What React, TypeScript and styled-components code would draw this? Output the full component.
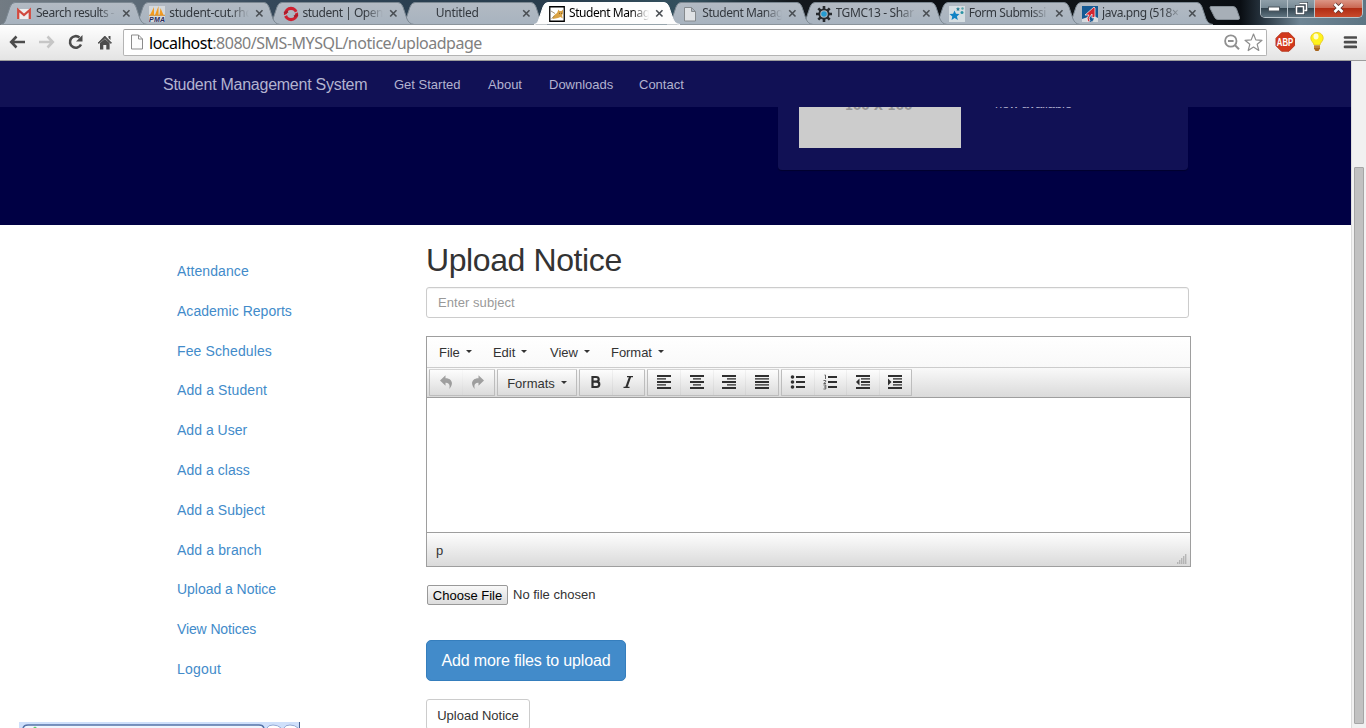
import React from 'react';
import styled, { createGlobalStyle } from 'styled-components';

const Global = createGlobalStyle`
  * { box-sizing: border-box; }
  html, body { margin: 0; padding: 0; overflow: hidden; }
  body { font-family: "Liberation Sans", Arial, sans-serif; background: #fff; }
  h1, p, ul { margin: 0; padding: 0; }
`;

const Screen = styled.div`
  width: 1366px;
  height: 728px;
  overflow: hidden;
  display: flex;
  flex-direction: column;
  position: relative;
`;

/* ---------- window frame and tabs ---------- */

const Frame = styled.div`
  height: 25px;
  flex: none;
  display: flex;
  justify-content: space-between;
  background: linear-gradient(90deg, #727b83 0, #5e6c78 130px, #35485a 270px, #2a3f50 420px, #283c4c 560px, #34515f 690px, #14191e 790px, #0d1014 930px, #10161a 1150px, #090d12 1240px, #27343f 1262px, #6e8594 1300px, #5d7584 1366px);
`;

const TabStrip = styled.div`
  display: flex;
  padding-left: 1px;
  height: 25px;
`;

const TabBox = styled.div<{ $order: number }>`
  width: 133.25px;
  height: 25px;
  flex: none;
  position: relative;
  z-index: ${p => p.$order};
`;

const TabShape = styled.svg`
  position: absolute;
  left: 0;
  top: 0;
  width: 147px;
  height: 25px;
`;

const TabBody = styled.div`
  position: relative;
  display: flex;
  align-items: center;
  height: 25px;
  padding: 2px 0 0 15px;
`;

const Favicon = styled.svg`
  width: 16px;
  height: 16px;
  flex: none;
  margin-right: 4px;
`;

const TabTitle = styled.span<{ $active?: boolean; $ls: number }>`
  font: 12px/16px "Noto Sans", "Open Sans", sans-serif;
  letter-spacing: ${p => p.$ls}px;
  color: ${p => (p.$active ? '#000' : '#33383e')};
  width: 80px;
  margin-top: -1px;
  white-space: nowrap;
  overflow: hidden;
  mask-image: linear-gradient(90deg, #000 78%, transparent 100%);
`;

const Cross = styled.svg`
  width: 9px;
  height: 9px;
  margin-left: 6px;
  flex: none;
`;

const NewTab = styled.svg`
  width: 32px;
  height: 16px;
  margin: 5px 0 0 9px;
`;

const Controls = styled.div`
  display: flex;
  width: 103px;
  height: 18px;
  margin-right: 3px;
  border: 1px solid #b9c4cb;
  border-top: 0;
  border-radius: 0 0 5px 5px;
  overflow: hidden;
`;

const Control = styled.div<{ $close?: boolean }>`
  width: ${p => (p.$close ? 47 : 27)}px;
  display: flex;
  align-items: center;
  justify-content: center;
  flex: none;
  padding-bottom: 1px;
  border-right: ${p => (p.$close ? 0 : 1)}px solid #b9c4cb;
  background: ${p =>
    p.$close
      ? 'linear-gradient(#dc9585 0, #c96550 48%, #b12d14 50%, #c84a2c 100%)'
      : 'linear-gradient(#8f9fa9 0, #768994 48%, #33444f 50%, #5f7480 100%)'};
`;

/* ---------- address bar ---------- */

const Toolbar = styled.div`
  height: 36px;
  flex: none;
  display: flex;
  align-items: center;
  padding: 0 8px 1px 7px;
  background: linear-gradient(#fefefe, #e4e4e4);
  border-bottom: 1px solid #9c9c9c;
`;

const NavIcon = styled.svg`
  width: 22px;
  height: 22px;
  margin-right: 7px;
  flex: none;
`;

const UrlBox = styled.div`
  width: 1144px;
  height: 27px;
  flex: none;
  display: flex;
  align-items: center;
  border: 1px solid #b4b4b4;
  border-top-color: #9d9d9d;
  border-radius: 2px;
  background: #fff;
  padding: 0 3px 0 6px;
`;

const Url = styled.span`
  flex: 1;
  font: 16px/22px "Noto Sans", "Open Sans", sans-serif;
  letter-spacing: -0.48px;
  color: #808080;
  margin: 1px 0 0 5px;
  b { font-weight: 400; color: #000; }
`;

const BarIcon = styled.svg`
  flex: none;
`;

/* ---------- page ---------- */

const Viewport = styled.div`
  flex: 1;
  display: flex;
  min-height: 0;
`;

const Page = styled.div`
  width: 1351px;
  overflow: hidden;
  background: #fff;
`;

const ScrollTrack = styled.div`
  width: 15px;
  background: #f1f1f1;
  border-left: 1px solid #dcdcdc;
  padding: 106px 2px 4px;
`;

const ScrollThumb = styled.div`
  height: 557px;
  width: 10px;
  background: #c1c1c1;
  border: 1px solid #a6a6a6;
  border-radius: 1px;
`;

const Navbar = styled.nav`
  height: 46px;
  background: #111155;
  position: relative;
  z-index: 2;
  display: flex;
  align-items: center;
  padding: 1px 0 0 163px;
  color: #b3b3d0;
`;

const Brand = styled.span`
  font-size: 16px;
  line-height: 20px;
  width: 231px;
  letter-spacing: -0.26px;
`;

const NavLink = styled.span<{ $w: number }>`
  font-size: 13px;
  line-height: 20px;
  padding-top: 1px;
  width: ${p => p.$w}px;
`;

const Hero = styled.section`
  height: 118px;
  background: #000044;
  display: flex;
  align-items: flex-end;
  justify-content: flex-end;
  padding: 0 163px 55px 0;
  overflow: hidden;
`;

const Card = styled.div`
  width: 410px;
  height: 100px;
  flex: none;
  background: #111155;
  border-radius: 4px;
  box-shadow: 0 1px 1px #00002e;
  padding: 0 21px 22px;
  display: flex;
`;

const Placeholder = styled.div`
  width: 162px;
  height: 78px;
  background: #ccc;
  color: #969696;
  font: bold 12px/16px "DejaVu Sans", sans-serif;
  text-align: center;
  padding-top: 28px;
  padding-right: 3px;
`;

const CardText = styled.p`
  margin-left: 34px;
  padding-top: 25px;
  font-size: 13px;
  line-height: 18px;
  letter-spacing: -0.15px;
  color: #b3b3d0;
`;

const Columns = styled.div`
  display: flex;
  padding-left: 177px;
`;

const Sidebar = styled.ul`
  list-style: none;
  width: 249px;
  flex: none;
  padding-top: 26px;
`;

const SideLink = styled.li<{ $ls: number }>`
  height: 39.8px;
  line-height: 40px;
  font-size: 14px;
  letter-spacing: ${p => p.$ls}px;
  color: #428bca;
`;

const Main = styled.main`
  width: 765px;
  display: flex;
  flex-direction: column;
  align-items: flex-start;
`;

const Title = styled.h1`
  font-size: 32px;
  line-height: 36px;
  font-weight: 400;
  color: #333;
  letter-spacing: -0.4px;
  margin-top: 17px;
`;

const Subject = styled.div`
  width: 763px;
  height: 31px;
  margin-top: 9px;
  border: 1px solid #ccc;
  border-radius: 3px;
  padding: 0 11px;
  font-size: 13px;
  line-height: 29px;
  letter-spacing: 0.06px;
  color: #999;
  box-shadow: inset 0 1px 1px rgba(0, 0, 0, 0.05);
`;

const Editor = styled.div`
  width: 765px;
  height: 231px;
  margin-top: 18px;
  border: 1px solid #9e9e9e;
  display: flex;
  flex-direction: column;
`;

const MenuRow = styled.div`
  height: 31px;
  display: flex;
  align-items: center;
  padding-left: 12px;
  background: linear-gradient(#fff, #f9f9f9);
  border-bottom: 1px solid #ccc;
`;

const MenuItem = styled.div<{ $w: number }>`
  width: ${p => p.$w}px;
  display: flex;
  align-items: center;
  gap: 6px;
  font-size: 13px;
  letter-spacing: -0.05px;
  color: #333;
`;

const Caret = styled.i`
  border: 3px solid transparent;
  border-top-color: #333;
  border-bottom: 0;
  margin-top: -2px;
`;

const ToolRow = styled.div`
  height: 30px;
  display: flex;
  padding: 1px 0 0 2px;
  gap: 2px;
  background: linear-gradient(#f9f9f9, #dadada);
  border-bottom: 1px solid #9e9e9e;
`;

const Group = styled.div<{ $w: number }>`
  width: ${p => p.$w}px;
  height: 27px;
  display: flex;
  border: 1px solid #bdbdbd;
  border-top-color: #d4d4d4;
  border-radius: 1px;
  background: linear-gradient(#fdfdfd, #dbdbdb);
`;

const ToolButton = styled.div<{ $dim?: boolean; $text?: boolean }>`
  flex: 1;
  display: flex;
  align-items: center;
  justify-content: center;
  gap: 6px;
  padding-bottom: ${p => (p.$text ? 0 : 1)}px;
  padding-top: ${p => (p.$text ? 1 : 0)}px;
  font-size: 13px;
  color: #333;
  opacity: ${p => (p.$dim ? 0.42 : 1)};
  & + & { border-left: 1px solid rgba(0, 0, 0, 0.04); }
  svg { width: 16px; height: 16px; }
`;

const EditArea = styled.div`
  flex: 1;
`;

const StatusBar = styled.div`
  height: 34px;
  border-top: 1px solid #9e9e9e;
  background: linear-gradient(#fdfdfd, #dadada);
  display: flex;
  justify-content: space-between;
  align-items: flex-end;
  padding: 0 3px 2px 9px;
  font-size: 13px;
  color: #333;
  span { margin-bottom: 6px; }
`;

const FileRow = styled.div`
  display: flex;
  align-items: center;
  height: 20px;
  margin: 18px 0 0 1px;
  font-size: 13px;
  color: #333;
`;

const FileButton = styled.div`
  width: 81px;
  height: 20px;
  border: 1px solid #999;
  border-radius: 2px;
  background: linear-gradient(#f8f8f8, #dcdcdc);
  color: #000;
  line-height: 19px;
  text-align: center;
  margin-right: 5px;
`;

const FileName = styled.span`
  padding-bottom: 2px;
`;

const AddButton = styled.div`
  width: 200px;
  height: 41px;
  margin-top: 35px;
  background: #428bca;
  border: 1px solid #357ebd;
  border-radius: 5px;
  color: #fff;
  font-size: 16px;
  line-height: 39px;
  letter-spacing: -0.15px;
  text-align: center;
`;

const SubmitButton = styled.div`
  width: 104px;
  height: 31px;
  margin-top: 18px;
  border: 1px solid #ccc;
  border-radius: 3px;
  color: #333;
  font-size: 13px;
  line-height: 31px;
  text-align: center;
`;

const DownloadStrip = styled.svg`
  position: absolute;
  left: 19px;
  top: 722px;
`;

/* ---------- icons ---------- */

const PageGlyph = () => (
  <path d="M2.500 1.500h7l4 4v9.500h-11z M9.500 1.500v4h4" fill="#dfe2e5" stroke="#858a8e" strokeWidth="1" />
);

const favicons: Record<string, React.ReactNode> = {
  gmail: (
    <>
      <path d="M1 3h14v10H1z" fill="#eee" />
      <path d="M2.2 13V4L8 9l5.8-5v9" fill="none" stroke="#d14a3f" strokeWidth="2.3" />
    </>
  ),
  pma: (
    <>
      <path d="M0 0h16v16H0z" fill="#d5d9dc" />
      <path d="M1 9L5 1v8zM6 9L9.500 0v9zM10.500 9l1-7 3 7z" fill="#f29a1f" />
      <path d="M0 9.300h16" stroke="#d98c28" strokeWidth="1" />
      <text x="0" y="16" fontSize="7" fontWeight="bold" fontStyle="italic" fontFamily="Liberation Sans" fill="#29295c" textLength="16">PMA</text>
    </>
  ),
  openshift: (
    <>
      <circle cx="8" cy="8" r="5.600" fill="none" stroke="#cf2030" strokeWidth="3.200" />
      <path d="M0 10.500L5 8M11 7.500l5-2.500" stroke="#b1b9c2" strokeWidth="1.200" />
      <path d="M1 7l4-1.500M11 10.500l4-1.500" stroke="#a91d2c" strokeWidth="2" />
    </>
  ),
  tomcat: (
    <>
      <path d="M.75.75h14.500v14.500H.75z" fill="#fff" stroke="#000" strokeWidth="1.300" />
      <path d="M4 10.500l2.500-2.500 1.500-1 1.500-3.500 1 1.500h2l1.500-1.500v4l-1 1.500.8 3.500-2.300-1.500-2.500 1-2.500.5-3 .5z" fill="#dba344" />
      <path d="M2 5l4 2.500M2.500 12.500l3-2.500" stroke="#8d7b5b" strokeWidth=".8" />
      <path d="M10 7.300h.8M12 7.300h.8" stroke="#4d3a1c" strokeWidth=".9" />
    </>
  ),
  page: <PageGlyph />,
  gear: (
    <>
      <g stroke="#262a2e" strokeWidth="2.600">
        <path d="M8 0v16M0 8h16M2.300 2.300l11.400 11.400M13.700 2.300L2.300 13.700" />
      </g>
      <circle cx="8" cy="8" r="5.600" fill="#262a2e" />
      <circle cx="8" cy="8" r="3.800" fill="#b1b9c2" />
      <circle cx="8" cy="8" r="2.800" fill="#259bd0" />
    </>
  ),
  stars: (
    <>
      <path d="M0 0h16v16H0z" fill="#d6dee2" />
      <path d="M5.500 4.500l1.500 3.300 3.500.2-2.600 2.400 1 3.600-3.300-1.900L2.500 14l.8-3.600L.5 8l3.600-.3z" fill="#1283c4" />
      <path d="M9 1l.7 1.300 1.300.2-1 1 .3 1.500L9 4.300 7.700 5 8 3.500l-1-1 1.300-.2z" fill="#2b7f94" />
      <circle cx="13.500" cy="2.500" r="1.200" fill="#5aa5ad" />
      <circle cx="13" cy="6.500" r="1.500" fill="#2b93a4" />
    </>
  ),
  java: (
    <>
      <path d="M0 0h16v12L8 16H0z" fill="#155a94" />
      <path d="M0 13l6-2v5H0zM12 10l4 2v4h-5z" fill="#d6dade" />
      <path d="M3 9L12 1l1 1v9l-3 1v-4l-3 4 1 3-2 1-1-4 2-3z" fill="#d22630" stroke="#fff" strokeWidth=".7" />
    </>
  ),
};

type TabInfo = { title: string; icon?: string; ls: number };

const tabs: TabInfo[] = [
  { title: 'Search results -', icon: 'gmail', ls: -0.48 },
  { title: 'student-cut.rhc', icon: 'pma', ls: -0.3 },
  { title: 'student | Open', icon: 'openshift', ls: -0.48 },
  { title: 'Untitled', ls: -0.28 },
  { title: 'Student Manag', icon: 'tomcat', ls: -0.45 },
  { title: 'Student Manag', icon: 'page', ls: -0.45 },
  { title: 'TGMC13 - Shar', icon: 'gear', ls: -0.38 },
  { title: 'Form Submissi', icon: 'stars', ls: -0.45 },
  { title: 'java.png (518×', icon: 'java', ls: -0.42 },
];

const Tab = ({ tab, index }: { tab: TabInfo; index: number }) => {
  const active = index === 4;
  return (
    <TabBox $order={active ? 20 : 10 - index}>
      <TabShape viewBox="0 0 147 25">
        <defs>
          <linearGradient id="idle" x1="0" y1="0" x2="0" y2="1">
            <stop offset="0" stopColor="#b3bac3" />
            <stop offset="1" stopColor="#a7b3bf" />
          </linearGradient>
        </defs>
        <path
          d="M0 24.500C3 24 4 22 5 19L9 7Q10.500 2.500 14 2.500H130Q133.500 2.500 135 7L139 19C140.500 22 142 24 146 24.500"
          fill={active ? '#fdfdfd' : 'url(#idle)'}
          stroke={active ? '#fdfdfd' : '#7b8791'}
          strokeWidth="1"
        />
        {active ? null : <path d="M0 24.500h146" stroke="#8b949b" />}
      </TabShape>
      <TabBody>
        <Favicon viewBox="0 0 16 16">{tab.icon ? favicons[tab.icon] : null}</Favicon>
        <TabTitle $active={active} $ls={tab.ls}>{tab.title}</TabTitle>
        <Cross viewBox="0 0 9 9">
          <path d="M1.200 1.200l6.300 6.300M7.500 1.200L1.200 7.500" stroke="#4a4f54" strokeWidth="1.600" />
        </Cross>
      </TabBody>
    </TabBox>
  );
};

const lines = (rows: [number, number][]) =>
  rows.map(([x, w], i) => (
    <rect key={i} x={x} y={1 + i * 3} width={w} height={i % 2 ? 1.7 : 2} fill={i % 2 ? '#5c5c5c' : '#2f2f2f'} />
  ));

const Undo = ({ flip }: { flip?: boolean }) => (
  <svg viewBox="0 0 16 16">
    <path
      transform={flip ? 'translate(16 0) scale(-1 1)' : undefined}
      d="M7.500 1.200L2 6.500l5.500 5.300V8.700c3.200-.2 5 1.800 3.700 6.300 5-5 2.800-10.900-3.700-10.800z"
      fill="#333"
    />
  </svg>
);

const sideLinks: [string, number][] = [
  ['Attendance', 0.1],
  ['Academic Reports', 0.03],
  ['Fee Schedules', 0.12],
  ['Add a Student', 0.1],
  ['Add a User', 0.02],
  ['Add a class', 0.05],
  ['Add a Subject', 0.06],
  ['Add a branch', 0.12],
  ['Upload a Notice', -0.04],
  ['View Notices', -0.12],
  ['Logout', 0.2],
];

export default function App() {
  return (
    <Screen>
      <Global />
      <Frame>
        <TabStrip>
          {tabs.map((t, i) => (
            <Tab key={i} tab={t} index={i} />
          ))}
          <NewTab viewBox="0 0 32 16">
            <path d="M2 1.500h22q2.500 0 3.500 2.500l3 8.500q.5 2-1.500 2H9q-2.500 0-3.500-2.500L1 3q-.3-1.500 1-1.500z" fill="#a7afb7" stroke="#868f97" />
          </NewTab>
        </TabStrip>
        <Controls>
          <Control>
            <svg width="14" height="8" viewBox="0 0 14 8">
              <rect x="1.500" y="3" width="11" height="4" fill="#fff" stroke="#4d565e" />
            </svg>
          </Control>
          <Control>
            <svg width="13" height="13" viewBox="0 0 13 13">
              <path d="M4.500 1.500h7v7h-2M1.500 4.500h7v7h-7z" fill="none" stroke="#3e4750" strokeWidth="3" />
              <path d="M4.500 1.500h7v7h-2M1.500 4.500h7v7h-7z" fill="none" stroke="#fff" strokeWidth="1.500" />
            </svg>
          </Control>
          <Control $close>
            <svg width="13" height="12" viewBox="0 0 13 12">
              <path d="M2.500 2l8 8M10.500 2l-8 8" stroke="#5c3430" strokeWidth="4.200" />
              <path d="M2.500 2l8 8M10.500 2l-8 8" stroke="#fff" strokeWidth="2.600" />
            </svg>
          </Control>
        </Controls>
      </Frame>

      <Toolbar>
        <NavIcon viewBox="0 0 22 22">
          <path d="M4 11H18M9.500 5.500L4.200 11l5.300 5.500" fill="none" stroke="#4c4c4c" strokeWidth="2.600" />
        </NavIcon>
        <NavIcon viewBox="0 0 22 22">
          <path d="M3 11h14M11.500 5.500l5.300 5.500-5.300 5.500" fill="none" stroke="#c6c6c6" strokeWidth="2.600" />
        </NavIcon>
        <NavIcon viewBox="0 0 22 22">
          <path d="M14.500 6.500A5.800 5.800 0 1 0 16 13.500" fill="none" stroke="#4c4c4c" strokeWidth="2.600" />
          <path d="M17.500 4v6.500H11z" fill="#4c4c4c" />
        </NavIcon>
        <NavIcon viewBox="0 0 22 22">
          <path d="M4 12l6.800-7 6.800 7-1 .3-5.800-5-5.800 5z" fill="#4c4c4c" stroke="#4c4c4c" strokeWidth=".8" />
          <path d="M6 12l4.800-4 4.800 4v6.500h-3.300v-4.500h-3v4.500H6zM14.500 5h2v4l-2-2z" fill="#4c4c4c" />
        </NavIcon>
        <UrlBox>
          <BarIcon width="14" height="18" viewBox="0 0 14 18">
            <path d="M1.500 2h7l4 4v10h-11zM8.500 2v4h4" fill="#fcfcfc" stroke="#8b8b8b" />
          </BarIcon>
          <Url><b>localhost</b>:8080/SMS-MYSQL/notice/uploadpage</Url>
          <BarIcon width="18" height="18" viewBox="0 0 18 18">
            <circle cx="7.800" cy="8" r="5.700" fill="none" stroke="#909090" strokeWidth="1.800" />
            <path d="M5 8h5.600M12 12.300L16 16.300" stroke="#909090" strokeWidth="2" />
          </BarIcon>
          <BarIcon width="22" height="22" viewBox="0 0 22 22">
            <path d="M12.500 3l2.300 5.900 6.200.4-4.800 4 1.600 6.200-5.300-3.400-5.300 3.400 1.600-6.200-4.800-4 6.200-.4z" fill="#fff" stroke="#8e8e8e" strokeWidth="1.200" strokeLinejoin="round" />
          </BarIcon>
        </UrlBox>
        <BarIcon width="36" height="22" viewBox="0 0 36 22">
          <path d="M14.500 1.800h7.500l5.500 5.500v7.400l-5.500 5.500h-7.500L9 14.700V7.300z" fill="#d3381c" stroke="#b83a22" />
          <text x="9.800" y="15" fontSize="10.500" fontWeight="bold" fontFamily="Liberation Sans" fill="#fff" textLength="16.500" lengthAdjust="spacingAndGlyphs">ABP</text>
        </BarIcon>
        <BarIcon width="28" height="22" viewBox="0 0 28 22">
          <path d="M14 1.500c-3.700 0-6.200 2.500-6.200 5.800 0 3 3 4 3.200 6.700h6c.2-2.700 3.200-3.700 3.200-6.700 0-3.300-2.500-5.800-6.200-5.800z" fill="#fff21c" stroke="#e3c51c" strokeWidth=".8" />
          <ellipse cx="13" cy="5.500" rx="2.500" ry="3" fill="#fffdd0" />
          <path d="M11 14.500h6v3L15.500 20h-3L11 17.500z" fill="#a8651e" />
          <path d="M11 16h6" stroke="#e0a454" />
        </BarIcon>
        <BarIcon width="26" height="22" viewBox="0 0 26 22">
          <path d="M14 6.500h11M14 11.200h11M14 15.900h11" stroke="#4c4c4c" strokeWidth="2.700" strokeLinecap="round" />
        </BarIcon>
      </Toolbar>

      <Viewport>
        <Page>
          <Navbar>
            <Brand>Student Management System</Brand>
            <NavLink $w={94}>Get Started</NavLink>
            <NavLink $w={61}>About</NavLink>
            <NavLink $w={90}>Downloads</NavLink>
            <NavLink $w={60}>Contact</NavLink>
          </Navbar>
          <Hero>
            <Card>
              <Placeholder>100 X 100</Placeholder>
              <CardText>new available</CardText>
            </Card>
          </Hero>
          <Columns>
            <Sidebar>
              {sideLinks.map(([label, ls]) => (
                <SideLink key={label} $ls={ls}>{label}</SideLink>
              ))}
            </Sidebar>
            <Main>
              <Title>Upload Notice</Title>
              <Subject>Enter subject</Subject>
              <Editor>
                <MenuRow>
                  <MenuItem $w={54}>File<Caret /></MenuItem>
                  <MenuItem $w={57}>Edit<Caret /></MenuItem>
                  <MenuItem $w={61}>View<Caret /></MenuItem>
                  <MenuItem $w={60}>Format<Caret /></MenuItem>
                </MenuRow>
                <ToolRow>
                  <Group $w={66}>
                    <ToolButton $dim><Undo /></ToolButton>
                    <ToolButton $dim><Undo flip /></ToolButton>
                  </Group>
                  <Group $w={80}>
                    <ToolButton $text>Formats<Caret /></ToolButton>
                  </Group>
                  <Group $w={66}>
                    <ToolButton>
                      <svg viewBox="0 0 16 16">
                        <path d="M4.500 3h3.500q2.700 0 2.700 2.300T8 7.700H4.500zM4.500 7.700h4q2.800 0 2.800 2.600T8.500 13h-4z" fill="none" stroke="#2f2f2f" strokeWidth="2.200" />
                      </svg>
                    </ToolButton>
                    <ToolButton>
                      <svg viewBox="0 0 16 16">
                        <path d="M7 2.600h6M3.500 13.400h6" stroke="#2f2f2f" strokeWidth="1.300" />
                        <path d="M10.200 2.500L6.300 13.500" stroke="#2f2f2f" strokeWidth="2.200" />
                      </svg>
                    </ToolButton>
                  </Group>
                  <Group $w={132}>
                    <ToolButton><svg viewBox="0 0 16 16">{lines([[1, 14], [1, 9], [1, 14], [1, 9], [1, 14]])}</svg></ToolButton>
                    <ToolButton><svg viewBox="0 0 16 16">{lines([[1, 14], [4, 8], [1, 14], [4, 8], [1, 14]])}</svg></ToolButton>
                    <ToolButton><svg viewBox="0 0 16 16">{lines([[1, 14], [6, 9], [1, 14], [6, 9], [1, 14]])}</svg></ToolButton>
                    <ToolButton><svg viewBox="0 0 16 16">{lines([[1, 14], [1, 14], [1, 14], [1, 14], [1, 14]])}</svg></ToolButton>
                  </Group>
                  <Group $w={131}>
                    <ToolButton>
                      <svg viewBox="0 0 16 16">
                        <path d="M6 3h9M6 8h9M6 13h9" stroke="#2f2f2f" strokeWidth="1.800" />
                        <g fill="#2f2f2f"><circle cx="2.500" cy="3" r="1.800" /><circle cx="2.500" cy="8" r="1.800" /><circle cx="2.500" cy="13" r="1.800" /></g>
                      </svg>
                    </ToolButton>
                    <ToolButton>
                      <svg viewBox="0 0 16 16">
                        <path d="M6 3h9M6 8h9M6 13h9" stroke="#2f2f2f" strokeWidth="1.800" />
                        <path d="M2.500 1h1v4M1.500 6.500h2.200v1.300L1.700 9.500h2.300M1.500 11h2.300v4H1.500M2 13h1.500" fill="none" stroke="#555" strokeWidth=".9" />
                      </svg>
                    </ToolButton>
                    <ToolButton>
                      <svg viewBox="0 0 16 16">{lines([[1, 14], [6, 9], [6, 9], [6, 9], [1, 14]])}<path d="M4.500 4.500v7L1 8z" fill="#2f2f2f" /></svg>
                    </ToolButton>
                    <ToolButton>
                      <svg viewBox="0 0 16 16">{lines([[1, 14], [6, 9], [6, 9], [6, 9], [1, 14]])}<path d="M1 4.500v7L4.500 8z" fill="#2f2f2f" /></svg>
                    </ToolButton>
                  </Group>
                </ToolRow>
                <EditArea />
                <StatusBar>
                  <span>p</span>
                  <svg width="10" height="10" viewBox="0 0 10 10">
                    <path d="M8 1h2M6 3h4M4 5h6M2 7h8M0 9h10" stroke="#8a8a8a" strokeWidth="1.200" strokeDasharray="1.400 .6" />
                  </svg>
                </StatusBar>
              </Editor>
              <FileRow>
                <FileButton>Choose File</FileButton>
                <FileName>No file chosen</FileName>
              </FileRow>
              <AddButton>Add more files to upload</AddButton>
              <SubmitButton>Upload Notice</SubmitButton>
            </Main>
          </Columns>
        </Page>
        <ScrollTrack>
          <ScrollThumb />
        </ScrollTrack>
      </Viewport>

      <DownloadStrip width="282" height="6" viewBox="0 0 282 6">
        <path d="M0 0h281v6H0z" fill="#cfe0fb" />
        <path d="M4 6q1-3 5-3h231q4 0 5 3" fill="#eef5fe" stroke="#5673a8" strokeWidth="1.400" />
        <path d="M248 6q1-3 6-3t8 3M265 6q1-3 6-3t8 3" fill="#fff" stroke="#93a9d4" />
        <path d="M14 6l2-1.500 2 1.500z" fill="#5fcf6a" />
        <path d="M280.500 0v6" stroke="#47618f" />
      </DownloadStrip>
    </Screen>
  );
}
